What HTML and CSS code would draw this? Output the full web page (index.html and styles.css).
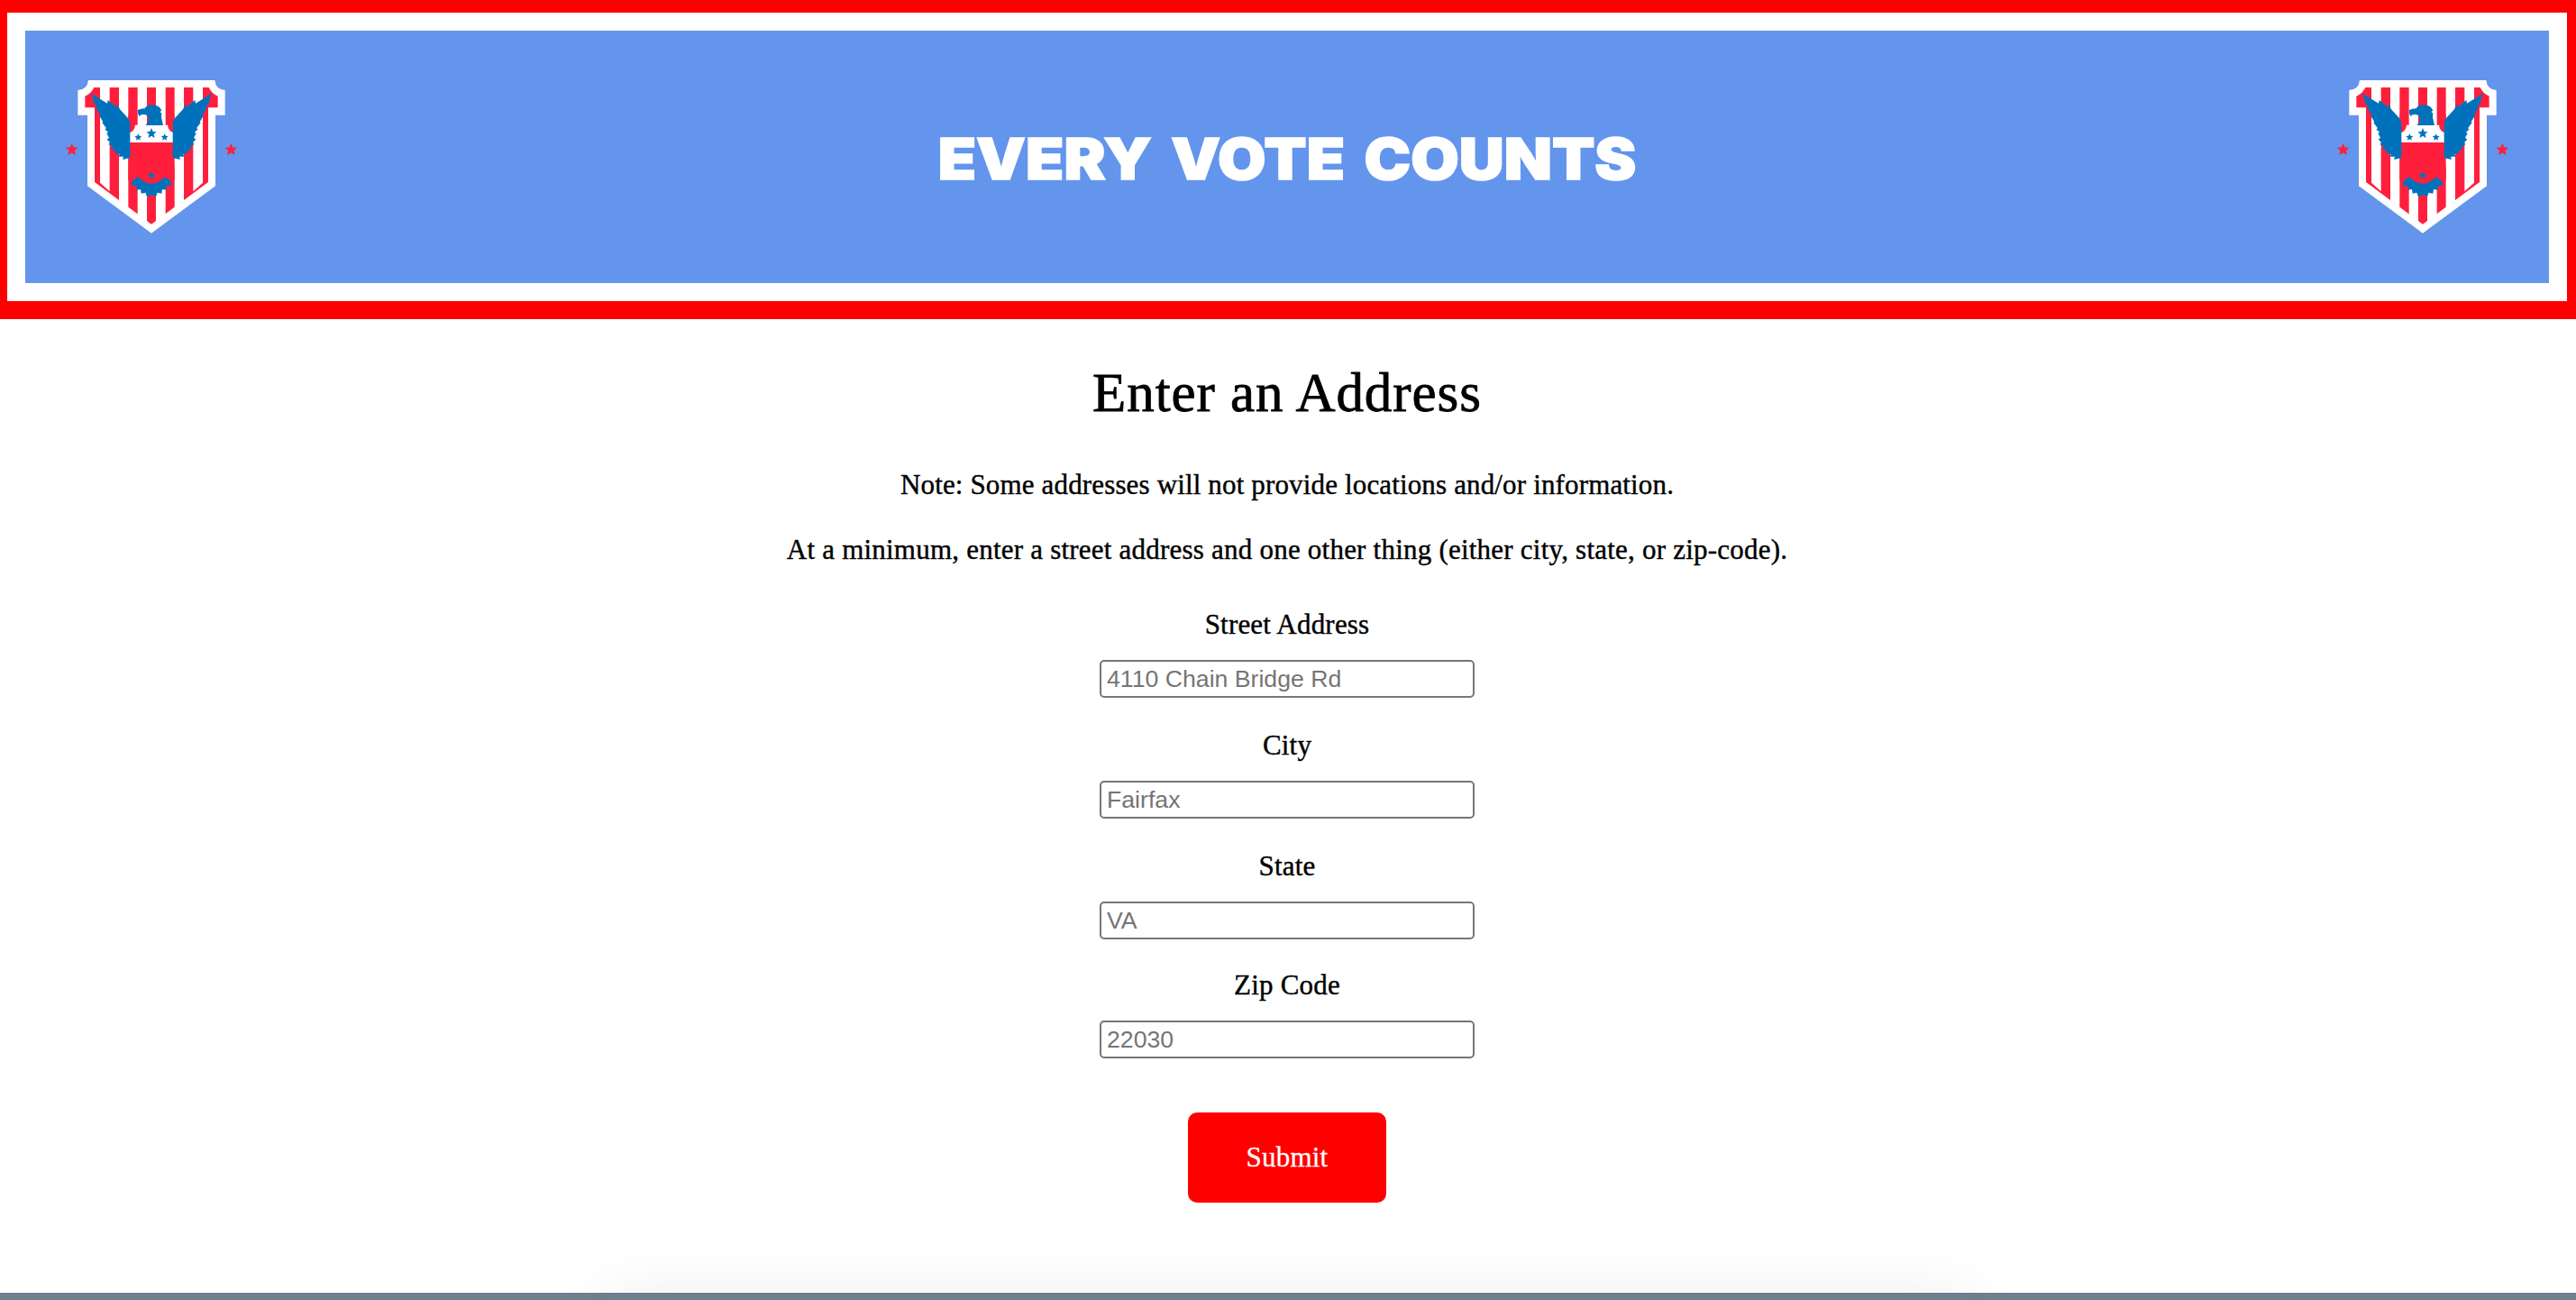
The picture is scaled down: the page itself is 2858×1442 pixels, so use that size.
FILE: index.html
```
<!DOCTYPE html>
<html lang="en">
<head>
<meta charset="utf-8">
<title>Every Vote Counts</title>
<link rel="stylesheet" href="styles.css">
</head>
<body>
<header class="banner">
  <div class="banner-inner">
    <svg class="logo" viewBox="204 222 600 600" role="img" aria-label="Eagle shield">
      <defs>
        <path id="star" d="M0-21 5.8-7.5 20-6.5 9 3 12.5 17.500 0 10-12.500 17.500-9 3-20-6.500-5.800-7.500Z"/>
        <path id="wing" d="M302 310 357 344 359 333 389 357 391 346 399 364 426 393Q434 404 433 414V525L422 528 408 531 411 521 395 521 398 513 379 508 385 502 369 494 376 488 361 480 367 475 356 464 363 458 355 444 360 440 349 430 354 427 340 408 343 406 330 384 333 382 318 356 322 354 308 336 312 334Z"/>
        <g id="crest">
          <path fill="#fff" d="M294 267H715Q718 298 749 300V383H717V619L504 776 291 619V383H259V300Q291 298 294 267Z"/>
          <path fill="#ff1f3d" d="M313 291H695Q705 312 725 320V358H693V606L504 746 315 606V358H283V320Q303 312 313 291Z"/>
          <path fill="#fff" d="M333 290H365V637L333 608ZM396 290H427V692L396 668ZM458 290H489V737L458 714ZM519 290H551V714L519 737ZM581 290H612V668L581 692ZM643 290H675V608L643 637Z"/>
          <path fill="#ff1f3d" d="M432 474H576V530L581 560V600L504 615 427 600V540Z"/>
          <path fill="#ff1f3d" d="M427 380H452V418Q446 438 427 441ZM581 380H556V418Q562 438 581 441Z"/>
          <path fill="#fff" d="M450 416H558Q560 436 577 441V474H432V441Q448 436 450 416Z"/>
          <g fill="#0072bc">
            <use href="#wing"/>
            <use href="#wing" transform="matrix(-1 0 0 1 1008 0)"/>
          </g>
          <path fill="#ff1f3d" d="M489 386H497V403L489 409Z"/>
          <path fill="#0072bc" d="M485 417Q495 405 495 392 490 380 476 381 466 381 465 388 457 380 459 366Q468 361 482 361 488 349 506 349 530 349 538 368L532 372 538 377 537 390 543 417Z"/>
          <path fill="#0072bc" d="M458 588Q504 634 550 588L570 605 569 618 554 619 553 632 540 630 538 644 524 641 519 655 504 649 489 655 484 641 470 644 468 630 456 632 454 619 439 618 438 605Z"/>
          <g fill="#0072bc">
            <use href="#star" transform="translate(504 444) scale(.85)"/>
            <use href="#star" transform="translate(460 457) scale(.6)"/>
            <use href="#star" transform="translate(548 457) scale(.6)"/>
            <use href="#star" transform="translate(504 584) scale(.65)"/>
          </g>
          <g fill="#ff1f3d">
            <use href="#star" transform="translate(239 498) scale(1.04)"/>
            <use href="#star" transform="translate(769 498) scale(1.04)"/>
          </g>
        </g>
      </defs>
      <use href="#crest"/>
    </svg>
    <h1 class="title">EVERY VOTE COUNTS</h1>
    <svg class="logo" viewBox="204 222 600 600" role="img" aria-label="Eagle shield"><use href="#crest"/></svg>
  </div>
</header>
<main class="lookup">
  <h2 class="heading">Enter an Address</h2>
  <p class="note">Note: Some addresses will not provide locations and/or information.</p>
  <p class="note note-wide">At a minimum, enter a street address and one other thing (either city, state, or zip-code).</p>
  <form class="form">
    <label class="field">Street Address<input placeholder="4110 Chain Bridge Rd"></label>
    <label class="field">City<input placeholder="Fairfax"></label>
    <label class="field field-state">State<input placeholder="VA"></label>
    <label class="field">Zip Code<input placeholder="22030"></label>
    <button class="submit" type="button">Submit</button>
  </form>
</main>
<footer class="footer"></footer>
</body>
</html>
```
FILE: styles.css
```
* { box-sizing: border-box; }

body {
  margin: 0;
  height: 1442px;
  overflow: hidden;
  display: flex;
  flex-direction: column;
  background: #fff;
  color: #000;
  font-family: "Liberation Serif", "Times New Roman", serif;
}

.banner {
  height: 354px;
  border: solid #f00;
  border-width: 14px 10px 20px 8px;
}

.banner-inner {
  height: 320px;
  border: 20px solid #fff;
  padding: 40px;
  display: flex;
  align-items: center;
  justify-content: space-between;
  background: cornflowerblue;
}

.logo { width: 200px; height: 200px; }

.title {
  margin: 0;
  padding-top: 4px;
  color: #fff;
  font: 900 63px/80px Inter, sans-serif;
  word-spacing: 7px;
  transform: scaleX(1.097);
  -webkit-text-stroke: 1.6px #fff;
}

.lookup {
  height: 1080px;
  padding-right: 2px;
  display: flex;
  flex-direction: column;
  align-items: center;
}

.heading {
  margin: 42px 0 0;
  font-size: 61px;
  line-height: 80px;
  font-weight: 400;
  letter-spacing: 0.95px;
  -webkit-text-stroke: 0.8px #000;
}

.note {
  margin: 0;
  font-size: 31px;
  line-height: 40px;
  letter-spacing: 0.15px;
  -webkit-text-stroke: 0.4px #000;
}

.note-wide { letter-spacing: 0.22px; }

.heading + .note { margin-top: 42px; }
.note + .note { margin-top: 32px; }

.form {
  margin-top: 43px;
  display: flex;
  flex-direction: column;
  align-items: center;
}

.field {
  height: 134px;
  display: flex;
  flex-direction: column;
  align-items: center;
  gap: 19px;
  font-size: 31px;
  line-height: 40px;
  letter-spacing: 0.2px;
  -webkit-text-stroke: 0.4px #000;
}

.field-state { height: 132px; }

.field input {
  width: 416px;
  height: 42px;
  padding: 2px 6px;
  border: 2px solid #767676;
  border-radius: 5px;
  font: 26.67px "Liberation Sans", Arial, sans-serif;
  letter-spacing: 0;
  -webkit-text-stroke: 0;
}

.field input::placeholder { color: #757575; }

.submit {
  margin-top: 27px;
  width: 220px;
  height: 100px;
  border: 0;
  border-radius: 10px;
  background: #f00;
  color: #fff;
  font: 31px/40px "Liberation Serif", "Times New Roman", serif;
  letter-spacing: 0.2px;
  -webkit-text-stroke: 0.3px #fff;
}

.footer {
  height: 8px;
  padding: 2px 672px 0;
  background: slategray;
}

.footer::before {
  content: "";
  display: block;
  height: 200px;
  box-shadow: 0 0 64px rgba(0, 0, 0, 0.07);
}
```
